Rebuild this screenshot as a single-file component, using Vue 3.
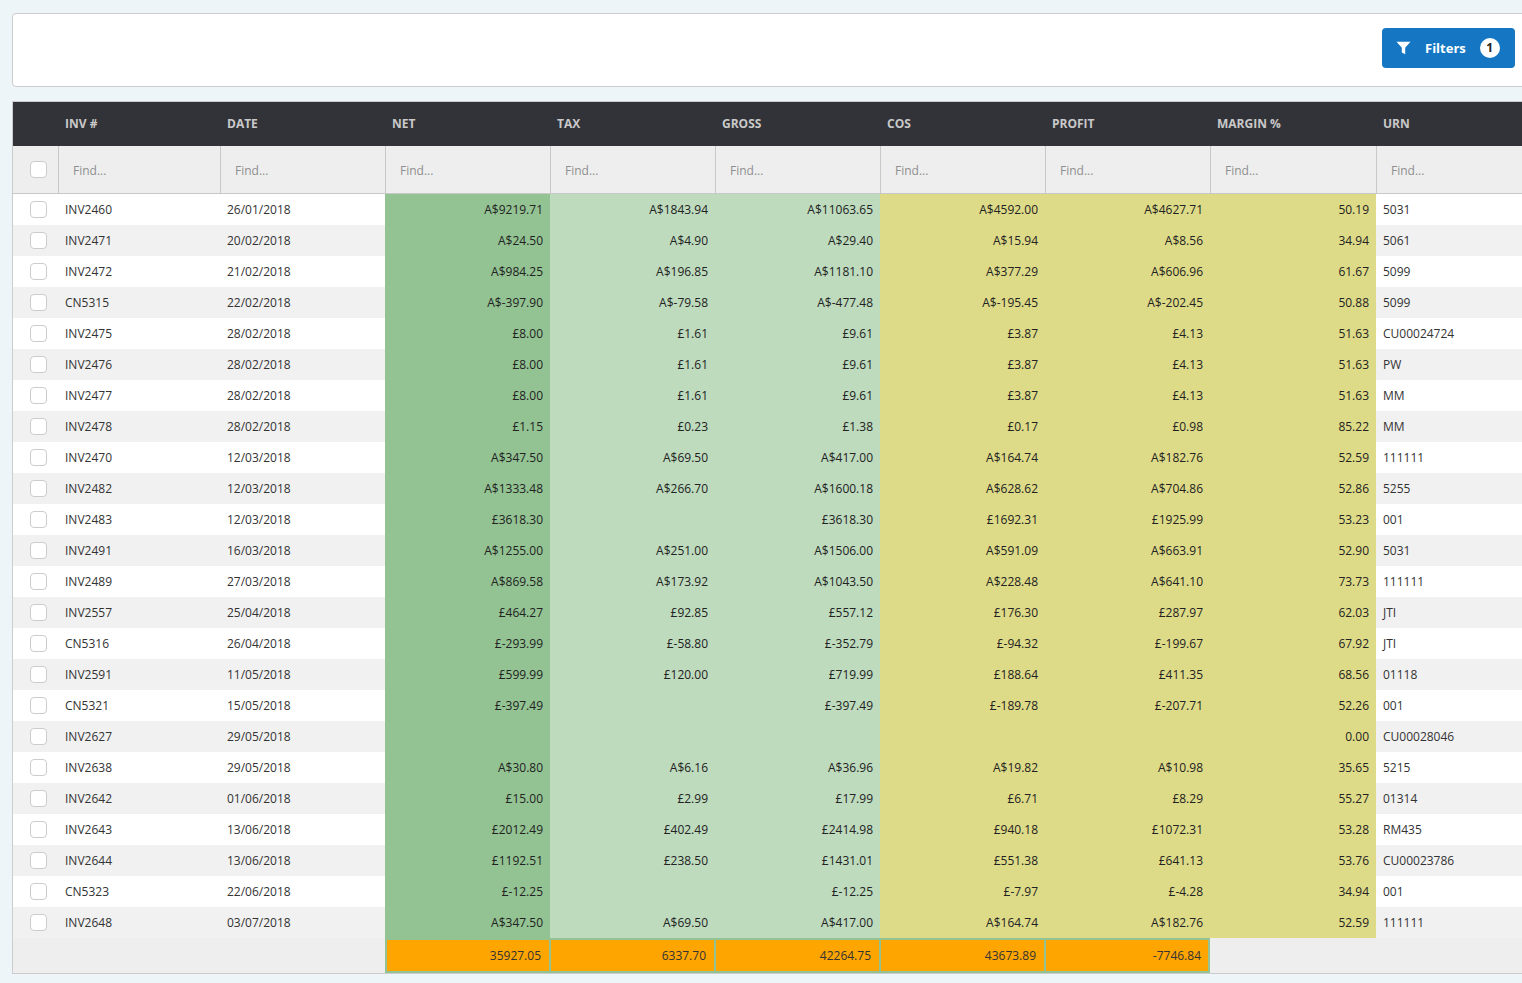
<template>
  <div class="page">
    <div class="toolbar">
      <button class="filter-btn">
        <svg class="funnel" viewBox="0 0 15 14" width="15" height="14">
          <path d="M0.5 0.8h14L9.2 6.8v6.4L5.8 11.4V6.8z" fill="#fff" />
        </svg>
        <span class="filter-label">Filters</span>
        <span class="badge">1</span>
      </button>
    </div>

    <div class="grid-wrap">
      <table class="grid">
        <colgroup>
          <col v-for="(w, i) in widths" :key="i" :style="{ width: w + 'px' }" />
        </colgroup>
        <thead>
          <tr class="head-row">
            <th></th>
            <th v-for="c in columns" :key="c">{{ c }}</th>
          </tr>
          <tr class="find-row">
            <td class="check-cell"><span class="check"></span></td>
            <td v-for="c in columns" :key="c"><input class="find" placeholder="Find..." /></td>
          </tr>
        </thead>
        <tbody>
          <tr v-for="r in rows" :key="r[0]" class="data-row">
            <td class="check-cell"><span class="check"></span></td>
            <td>{{ r[0] }}</td>
            <td>{{ r[1] }}</td>
            <td class="num net">{{ r[2] }}</td>
            <td class="num light">{{ r[3] }}</td>
            <td class="num light">{{ r[4] }}</td>
            <td class="num yellow">{{ r[5] }}</td>
            <td class="num yellow">{{ r[6] }}</td>
            <td class="num yellow">{{ r[7] }}</td>
            <td>{{ r[8] }}</td>
          </tr>
        </tbody>
        <tfoot>
          <tr class="total-row">
            <td colspan="3"></td>
            <td v-for="t in totals" :key="t" class="total">{{ t }}</td>
            <td colspan="2"></td>
          </tr>
        </tfoot>
      </table>
    </div>
  </div>
</template>

<script setup>
const widths = [45, 162, 165, 165, 165, 165, 165, 165, 166, 300]
const columns = ['INV #', 'DATE', 'NET', 'TAX', 'GROSS', 'COS', 'PROFIT', 'MARGIN %', 'URN']
const totals = ['35927.05', '6337.70', '42264.75', '43673.89', '-7746.84']

const rows = [
  ['INV2460', '26/01/2018', 'A$9219.71', 'A$1843.94', 'A$11063.65', 'A$4592.00', 'A$4627.71', '50.19', '5031'],
  ['INV2471', '20/02/2018', 'A$24.50', 'A$4.90', 'A$29.40', 'A$15.94', 'A$8.56', '34.94', '5061'],
  ['INV2472', '21/02/2018', 'A$984.25', 'A$196.85', 'A$1181.10', 'A$377.29', 'A$606.96', '61.67', '5099'],
  ['CN5315', '22/02/2018', 'A$-397.90', 'A$-79.58', 'A$-477.48', 'A$-195.45', 'A$-202.45', '50.88', '5099'],
  ['INV2475', '28/02/2018', '£8.00', '£1.61', '£9.61', '£3.87', '£4.13', '51.63', 'CU00024724'],
  ['INV2476', '28/02/2018', '£8.00', '£1.61', '£9.61', '£3.87', '£4.13', '51.63', 'PW'],
  ['INV2477', '28/02/2018', '£8.00', '£1.61', '£9.61', '£3.87', '£4.13', '51.63', 'MM'],
  ['INV2478', '28/02/2018', '£1.15', '£0.23', '£1.38', '£0.17', '£0.98', '85.22', 'MM'],
  ['INV2470', '12/03/2018', 'A$347.50', 'A$69.50', 'A$417.00', 'A$164.74', 'A$182.76', '52.59', '111111'],
  ['INV2482', '12/03/2018', 'A$1333.48', 'A$266.70', 'A$1600.18', 'A$628.62', 'A$704.86', '52.86', '5255'],
  ['INV2483', '12/03/2018', '£3618.30', '', '£3618.30', '£1692.31', '£1925.99', '53.23', '001'],
  ['INV2491', '16/03/2018', 'A$1255.00', 'A$251.00', 'A$1506.00', 'A$591.09', 'A$663.91', '52.90', '5031'],
  ['INV2489', '27/03/2018', 'A$869.58', 'A$173.92', 'A$1043.50', 'A$228.48', 'A$641.10', '73.73', '111111'],
  ['INV2557', '25/04/2018', '£464.27', '£92.85', '£557.12', '£176.30', '£287.97', '62.03', 'JTI'],
  ['CN5316', '26/04/2018', '£-293.99', '£-58.80', '£-352.79', '£-94.32', '£-199.67', '67.92', 'JTI'],
  ['INV2591', '11/05/2018', '£599.99', '£120.00', '£719.99', '£188.64', '£411.35', '68.56', '01118'],
  ['CN5321', '15/05/2018', '£-397.49', '', '£-397.49', '£-189.78', '£-207.71', '52.26', '001'],
  ['INV2627', '29/05/2018', '', '', '', '', '', '0.00', 'CU00028046'],
  ['INV2638', '29/05/2018', 'A$30.80', 'A$6.16', 'A$36.96', 'A$19.82', 'A$10.98', '35.65', '5215'],
  ['INV2642', '01/06/2018', '£15.00', '£2.99', '£17.99', '£6.71', '£8.29', '55.27', '01314'],
  ['INV2643', '13/06/2018', '£2012.49', '£402.49', '£2414.98', '£940.18', '£1072.31', '53.28', 'RM435'],
  ['INV2644', '13/06/2018', '£1192.51', '£238.50', '£1431.01', '£551.38', '£641.13', '53.76', 'CU00023786'],
  ['CN5323', '22/06/2018', '£-12.25', '', '£-12.25', '£-7.97', '£-4.28', '34.94', '001'],
  ['INV2648', '03/07/2018', 'A$347.50', 'A$69.50', 'A$417.00', 'A$164.74', 'A$182.76', '52.59', '111111']
]
</script>

<style>
html, body {
  margin: 0;
  background: #edf5f8;
  overflow: hidden;
}
</style>

<style scoped>
.page {
  width: 1522px;
  height: 983px;
  overflow: hidden;
  padding: 13px 0 0 12px;
  box-sizing: border-box;
  font-family: "Open Sans", sans-serif;
  font-size: 12px;
  color: #333;
}

.toolbar {
  width: 1600px;
  height: 74px;
  box-sizing: border-box;
  background: #fff;
  border: 1px solid #ccc;
  border-radius: 4px;
  padding-top: 14px;
  padding-left: 1369px;
  margin-bottom: 14px;
}

.filter-btn {
  display: flex;
  align-items: center;
  width: 133px;
  height: 40px;
  padding: 0 0 0 14px;
  box-sizing: border-box;
  background: #1577c3;
  border: 0;
  border-radius: 4px;
  color: #fff;
  font-family: inherit;
  font-size: 13px;
  font-weight: 700;
}

.funnel {
  flex: none;
}

.filter-label {
  margin-left: 14px;
}

.badge {
  width: 20px;
  height: 20px;
  margin-left: 14px;
  border-radius: 50%;
  background: #fff;
  color: #222;
  font-size: 12px;
  line-height: 20px;
  text-align: center;
}

.grid-wrap {
  width: 1600px;
  border: 1px solid #ccc;
  box-sizing: border-box;
  background: #eee;
}

.grid {
  border-collapse: separate;
  border-spacing: 0;
  table-layout: fixed;
  width: 1503px;
}

.grid td,
.grid th {
  padding: 0 6px 0 7px;
  box-sizing: border-box;
  white-space: nowrap;
  overflow: hidden;
}

.grid .head-row th {
  height: 44px;
  padding-bottom: 2px;
  background: #323338;
  color: #c9c9c9;
  font-size: 12px;
  font-weight: 700;
  text-align: left;
}

.grid .find-row td {
  height: 48px;
  padding: 0;
  background: #eee;
  border-left: 1px solid #c8c8c8;
  border-bottom: 1px solid #c8c8c8;
}

.grid .find-row td:first-child {
  border-left: 0;
}

.find {
  width: 100%;
  height: 100%;
  box-sizing: border-box;
  padding: 1px 14px 0;
  border: 0;
  outline: 0;
  background: transparent;
  font-family: inherit;
  font-size: 12px;
  color: #333;
}

.find::placeholder {
  color: #8f8f8f;
  opacity: 1;
}

.data-row td {
  height: 31px;
  background: #fff;
  color: #333;
}

.data-row:nth-child(even) td {
  background: #f1f1f1;
}

.grid .find-row .check-cell,
.grid .check-cell {
  padding: 0 0 0 17px;
  vertical-align: middle;
}

.check {
  display: block;
  width: 17px;
  height: 17px;
  box-sizing: border-box;
  background: #fff;
  border: 1px solid #ccc;
  border-radius: 4px;
}

.grid .data-row .num {
  text-align: right;
  padding-right: 7px;
  color: #222;
}

.grid .data-row .net {
  background: #93c393;
}

.grid .data-row .light {
  background: #bedbbe;
}

.grid .data-row .yellow {
  background: #dedb88;
}

.total-row td {
  height: 35px;
  background: #eee;
}

.grid .total-row .total {
  padding-right: 8px;
  background: #ffa500;
  border: 1px solid #93c393;
  border-width: 2px 1px;
  color: #333;
  text-align: right;
}

.grid .total-row .total:nth-child(2) {
  border-left-width: 2px;
}

.grid .total-row .total:nth-child(6) {
  padding-right: 7px;
  border-right-width: 2px;
}
</style>
